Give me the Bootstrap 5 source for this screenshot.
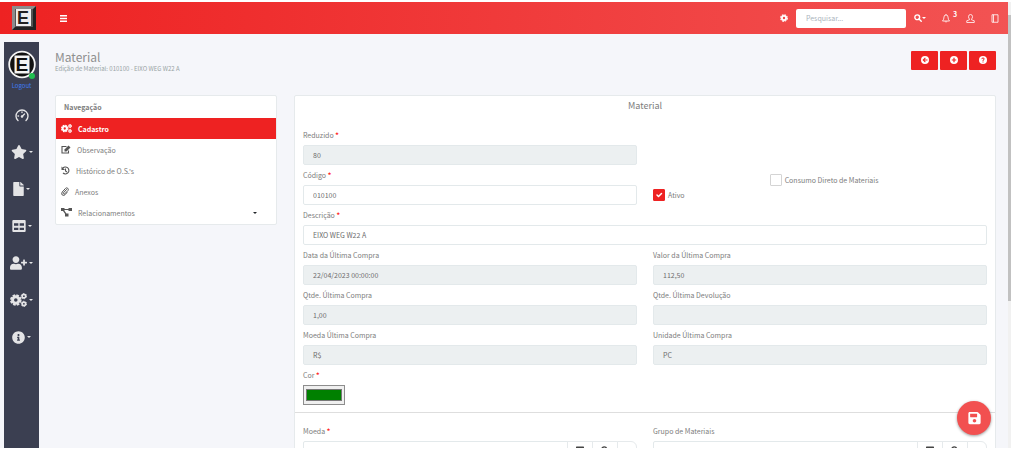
<!DOCTYPE html>
<html lang="pt-BR">
<head>
<meta charset="utf-8">
<meta name="viewport" content="width=device-width, initial-scale=1">
<title>Material</title>
<link rel="stylesheet" href="https://cdn.jsdelivr.net/npm/bootstrap@5.3.0/dist/css/bootstrap.min.css">
<style>
  :root { --brand: #ee2222; --text: #7c7c7c; --line: #e6eaec; }
  body { font-family: "Noto Sans CJK SC", "Noto Sans", sans-serif; font-size: 7px; line-height: 14px; color: var(--text); background: #fff; }
  svg { display: block; fill: currentColor; }
  .shell { padding: 2px 13px 3px 0; }
  .pane { background: #f5f6fa; }
  .scroll-track { width: 3px; background: #f1f1f1; padding-top: 13px; }
  .scroll-thumb { height: 66%; background: #c1c1c1; }
  .topbar { height: 32px; padding: 0 9px 0 12px; color: #fff; background: linear-gradient(90deg, #ee2222, #f25353); }
  .topbar button, .side button { color: inherit; background: none; border: 0; padding: 0; display: flex; align-items: center; }
  .brand-logo { margin-right: 24px; }
  .search { width: 110px; height: 19px; font-size: 7px; padding: 0 10px; border: 0; border-radius: 2px; color: #777; }
  .search::placeholder { color: #aab4bd; }
  .bell-count { font-size: 7px; font-weight: 700; line-height: 8px; top: -4px; left: 11px; }
  .side { width: 35px; margin: 8px 0 0 4px; background: #3b3f51; color: #e4e4e6; padding-top: 8px; }
  .side a { color: #3f7bf0; text-decoration: none; line-height: 14px; font-size: 6px; }
  .side-menu { gap: 17px; padding-top: 12px; }
  .side-menu button { height: 20px; gap: 2px; }
  .caret { width: 0; border: 2px solid transparent; border-top-color: currentColor; border-bottom: 0; }
  .online { width: 6px; height: 6px; background: #20c050; right: 1px; bottom: 0; }
  .content { padding: 15px 12px 0 16px; }
  .page-title { font-size: 12px; line-height: 16px; margin: 0; font-weight: 400; color: #8f8f8f; }
  .page-sub { font-size: 6px; line-height: 8px; color: #98a3a4; }
  .tools { gap: 2px; padding-top: 2px; }
  .tool { width: 27px; height: 19px; padding: 0 0 2px; border-radius: 1px; background: var(--brand); color: #fff; display: flex; align-items: center; justify-content: center; }
  .tool:hover { background: #d11; color: #fff; }
  .page-head { height: 46px; }
  .columns { gap: 17px; }
  .box { background: #fff; border: 1px solid var(--line); border-radius: 2px; }
  .nav-box { flex: 0 0 222px; }
  .nav-box h2 { font-size: 7px; font-weight: 700; line-height: 22px; margin: 0; padding-left: 8px; }
  .nav-box a { display: flex; align-items: center; height: 21px; padding: 0 19px 0 5px; gap: 6px; color: var(--text); text-decoration: none; }
  .nav-box a:last-child { margin-bottom: 1px; }
  .nav-box a svg { color: #555; }
  .nav-box a.active { background: var(--brand); color: #fff; font-weight: 700; }
  .nav-box a.active svg { color: #fff; }
  .form-box h2 { font-size: 9px; font-weight: 400; line-height: 20px; margin: 0 0 12px; text-align: center; }
  .form-box .row { --bs-gutter-x: 16px; margin-bottom: 3px; }
  .form-box .section { padding: 0 8px; }
  .field { display: block; line-height: 14px; margin-bottom: 3px; }
  .req { color: #f22; font-weight: 700; }
  .form-box .form-control { height: 20px; min-height: 20px; padding: 0 9px; font-size: 7px; line-height: 14px; color: #6c6c6c; border-color: #e3e9eb; border-radius: 2px; }
  .form-box .form-control:read-only { background: #ecf0f1; }
  .form-box .form-check-input { width: 12px; height: 12px; margin: 0 3px 0 0; float: none; flex: none; border: 1px solid #d4d4d4; border-radius: 1px; }
  .form-box .form-check-input:checked { background-color: var(--brand); border-color: var(--brand); }
  .check-high { padding-top: 5px; }
  .check-low { padding-top: 20px; }
  .swatch { display: block; width: 42px; height: 20px; padding: 1px 0; border: 1px solid #8d8d8d; background: #efefef; border-radius: 0; }
  .swatch::-webkit-color-swatch { border: 1px solid #777; }
  .swatch::-webkit-color-swatch-wrapper { padding: 2px; }
  .divider { border-top: 1px solid #dedede; margin-top: 7px; padding-top: 11px !important; }
  .picker .btn { width: 26px; height: 20px; padding: 4px 0 0; border: 1px solid var(--line); color: #444; background: #fff; display: flex; justify-content: center; }
  .picker .btn:last-child { width: 20px; }
  .fab { width: 34px; height: 34px; right: 17px; bottom: 13px; background: #f25050; color: #fff; box-shadow: 0 1px 3px #0006; display: flex; align-items: center; justify-content: center; border: 0; padding: 0; }
</style>
</head>
<body>
<svg class="d-none" xmlns="http://www.w3.org/2000/svg">
  <symbol id="cog" viewBox="0 0 16 16"><circle cx="8" cy="8" r="4.200" fill="none" stroke="currentColor" stroke-width="3.600"/><circle cx="8" cy="8" r="6.600" fill="none" stroke="currentColor" stroke-width="2.400" stroke-dasharray="3.400 1.784"/></symbol>
  <symbol id="cogs" viewBox="0 0 22 18"><g fill="none" stroke="currentColor"><circle cx="7.500" cy="9" r="4.200" stroke-width="3.800"/><circle cx="7.500" cy="9" r="6.400" stroke-width="2.200" stroke-dasharray="3.400 1.627"/><circle cx="18" cy="4" r="2.300" stroke-width="2.200"/><circle cx="18" cy="4" r="3.400" stroke-width="1.200" stroke-dasharray="1.780 1.780"/><circle cx="18" cy="14" r="2.300" stroke-width="2.200"/><circle cx="18" cy="14" r="3.400" stroke-width="1.200" stroke-dasharray="1.780 1.780"/></g></symbol>
  <symbol id="mag" viewBox="0 0 16 16"><g fill="none" stroke="currentColor" stroke-width="2.800"><circle cx="6.500" cy="6.500" r="4.800"/><path d="M10 10l4.500 4.500" stroke-linecap="round"/></g></symbol>
  <symbol id="grid" viewBox="0 0 20 18"><path fill-rule="evenodd" d="M1.500 0h17Q20 0 20 1.500v15q0 1.500-1.500 1.500h-17Q0 18 0 16.500v-15Q0 0 1.500 0zM2.500 5v3.500H9V5zM11 5v3.500h6.500V5zM2.500 11.500V15H9v-3.500zM11 11.500V15h6.500v-3.500z"/></symbol>
</svg>

<div class="shell vh-100 d-flex overflow-hidden">
  <div class="pane position-relative flex-grow-1 d-flex flex-column overflow-hidden">
    <header class="topbar d-flex align-items-center flex-shrink-0">
      <svg class="brand-logo" width="24" height="24" viewBox="0 0 24 24" role="img" aria-label="Logo"><path fill="#8c8c8c" d="M0 0h24v24H0z"/><path fill="#222" d="M24 0v24H0l4-4h16V4z"/><path fill="#555" d="M3 3h18v18H3z"/><path fill="#eee" d="M4 3h15v17H4z"/><text x="5" y="18" font-family="Liberation Sans" font-weight="700" font-size="18" fill="#222">E</text></svg>
      <button type="button" aria-label="Menu"><svg width="7" height="7" viewBox="0 0 7 7"><path d="M0 0h7v1.500H0zM0 2.700h7v1.500H0zM0 5.400h7v1.500H0z"/></svg></button>
      <button type="button" class="ms-auto" aria-label="Configurações"><svg width="8" height="8"><use href="#cog"/></svg></button>
      <input class="search form-control flex-grow-0 ms-2" type="search" placeholder="Pesquisar..." aria-label="Pesquisar">
      <button type="button" class="ms-2" aria-label="Buscar"><svg width="8" height="8"><use href="#mag"/></svg><span class="caret"></span></button>
      <button type="button" class="position-relative ms-3" aria-label="Notificações"><svg width="8" height="9" viewBox="0 0 16 18" fill="none" stroke="currentColor" stroke-width="1.600"><path fill="none" d="M1 14q3-3 3-8 0-4 4-4t4 4q0 5 3 8zM6 14.500Q8 18.500 10 14.500M8 0v2"/></svg><span class="bell-count position-absolute">3</span></button>
      <button type="button" class="ms-3" aria-label="Usuário"><svg width="9" height="9" viewBox="0 0 18 18" stroke="currentColor" stroke-width="1.600"><path fill="none" d="M9 1q4 0 4 4.500 0 3-2 4.500v1.500l5.500 2V17h-15v-3.500l5.500-2V10Q5 8.500 5 5.500 5 1 9 1z"/></svg></button>
      <button type="button" class="ms-3" aria-label="Painel"><svg width="8" height="9" viewBox="0 0 16 18" stroke="currentColor" stroke-width="1.600"><path fill="none" d="M2 1.500h12v15H2zM5 1.500v15"/></svg></button>
    </header>

    <div class="d-flex flex-grow-1 overflow-hidden">
      <aside class="side d-flex flex-column align-items-center flex-shrink-0">
        <div class="position-relative">
          <svg width="28" height="29" viewBox="0 0 28 28" role="img" aria-label="Usuário"><circle cx="14" cy="14" r="12.800" fill="#111" stroke="#f4f4f4" stroke-width="1.800"/><path fill="#f4f4f4" d="M6.500 5h15v18h-15z"/><text x="7.500" y="20.500" font-family="Liberation Sans" font-weight="700" font-size="19" fill="#111">E</text></svg>
          <span class="online rounded-circle position-absolute"></span>
        </div>
        <a href="#">Logout</a>
        <nav class="side-menu d-flex flex-column align-items-center">
          <button type="button" aria-label="Painel"><svg width="14" height="13" viewBox="0 0 28 26"><path fill="none" stroke="currentColor" stroke-width="2.800" stroke-linecap="round" d="M6 23A12 12 0 1 1 22 23M14 15l5-5M6 14h1M14 6v1"/><circle cx="14" cy="15" r="2.500"/></svg></button>
          <button type="button" aria-label="Favoritos"><svg width="16" height="14" viewBox="0 0 576 512"><path d="M259.300 17.800L194 150.200 47.900 171.500c-26.200 3.800-36.700 36.100-17.700 54.600l105.700 103-25 145.500c-4.500 26.300 23.200 46 46.400 33.700L288 439.600l130.700 68.700c23.200 12.200 50.900-7.400 46.400-33.700l-25-145.500 105.700-103c19-18.500 8.500-50.800-17.700-54.600L382 150.200 316.700 17.800c-11.700-23.600-45.600-23.900-57.400 0z"/></svg><span class="caret"></span></button>
          <button type="button" aria-label="Documentos"><svg width="11" height="14" viewBox="0 0 384 512"><path d="M224 136V0H24C10.700 0 0 10.700 0 24v464c0 13.300 10.700 24 24 24h336c13.300 0 24-10.700 24-24V160H248c-13.200 0-24-10.800-24-24zm160-14.100v6.100H256V0h6.100c6.400 0 12.500 2.500 17 7l97.900 98c4.500 4.500 7 10.600 7 16.900z"/></svg><span class="caret"></span></button>
          <button type="button" aria-label="Tabelas"><svg width="14" height="12"><use href="#grid"/></svg><span class="caret"></span></button>
          <button type="button" aria-label="Usuários"><svg width="17" height="14" viewBox="0 0 640 512"><path d="M624 208h-64v-64c0-8.800-7.200-16-16-16h-32c-8.800 0-16 7.200-16 16v64h-64c-8.800 0-16 7.200-16 16v32c0 8.800 7.200 16 16 16h64v64c0 8.800 7.200 16 16 16h32c8.800 0 16-7.200 16-16v-64h64c8.800 0 16-7.200 16-16v-32c0-8.800-7.200-16-16-16zm-400 48c70.700 0 128-57.300 128-128S294.700 0 224 0 96 57.300 96 128s57.300 128 128 128zm89.600 32h-16.700c-22.200 10.200-46.900 16-72.900 16s-50.600-5.800-72.900-16h-16.700C60.200 288 0 348.200 0 422.400V464c0 26.500 21.500 48 48 48h352c26.500 0 48-21.500 48-48v-41.600c0-74.200-60.200-134.400-134.400-134.400z"/></svg><span class="caret"></span></button>
          <button type="button" aria-label="Configurações"><svg width="17" height="14"><use href="#cogs"/></svg><span class="caret"></span></button>
          <button type="button" aria-label="Informações"><svg width="13" height="13" viewBox="0 0 512 512"><path d="M256 8C119 8 8 119 8 256s111 248 248 248 248-111 248-248S393 8 256 8zm0 110c23.200 0 42 18.800 42 42s-18.800 42-42 42-42-18.800-42-42 18.800-42 42-42zm56 254c0 6.600-5.400 12-12 12h-88c-6.600 0-12-5.400-12-12v-24c0-6.600 5.400-12 12-12h12v-64h-12c-6.600 0-12-5.400-12-12v-24c0-6.600 5.400-12 12-12h64c6.600 0 12 5.400 12 12v100h12c6.600 0 12 5.400 12 12v24z"/></svg><span class="caret"></span></button>
        </nav>
      </aside>

      <main class="content flex-grow-1 overflow-hidden">
        <div class="page-head d-flex justify-content-between align-items-start">
          <div>
            <h1 class="page-title">Material</h1>
            <div class="page-sub">Edição de Material: 010100 - EIXO WEG W22 A</div>
          </div>
          <div class="tools d-flex">
            <button type="button" class="tool btn" aria-label="Voltar"><svg width="8" height="8" viewBox="0 0 16 16"><path fill-rule="evenodd" d="M8 0a8 8 0 1 1 0 16A8 8 0 0 1 8 0zM8 3L3 8l5 5 1.500-1.500L7 9h6V7H7l2.500-2.500z"/></svg></button>
            <button type="button" class="tool btn" aria-label="Adicionar"><svg width="8" height="8" viewBox="0 0 16 16"><path fill-rule="evenodd" d="M8 0a8 8 0 1 1 0 16A8 8 0 0 1 8 0zM6.800 3.500v3.300H3.500v2.400h3.300v3.300h2.400V9.200h3.300V6.800H9.200V3.500z"/></svg></button>
            <button type="button" class="tool btn" aria-label="Ajuda"><svg width="8" height="8" viewBox="0 0 16 16"><circle cx="8" cy="8" r="8"/><path fill="none" stroke="#ee2222" stroke-width="2" d="M5.500 6.200Q5.700 4 8 4t2.500 2Q10.500 7.200 8 8.500V10M8 11v2"/></svg></button>
          </div>
        </div>

        <div class="columns d-flex align-items-start">
          <nav class="nav-box box" aria-label="Navegação">
            <h2>Navegação</h2>
            <a href="#" class="active"><svg width="11" height="9"><use href="#cogs"/></svg>Cadastro</a>
            <a href="#"><svg width="10" height="9" viewBox="0 0 20 18"><path fill="none" stroke="currentColor" stroke-width="2.200" d="M11 3H2v13h13v-5"/><path d="M7 9l8-8 4 4-8 8H7z"/></svg>Observação</a>
            <a href="#"><svg width="9" height="9" viewBox="0 0 18 18"><path fill="none" stroke="currentColor" stroke-width="2.200" d="M3 5a7 7 0 1 1 1 9M9 5v5l3 2"/><path d="M1 1v7h7z"/></svg>Histórico de O.S.'s</a>
            <a href="#"><svg width="8" height="9" viewBox="0 0 16 18"><path fill="none" stroke="currentColor" stroke-width="2" stroke-linecap="round" d="M11 5l-6 6.500q-1 1.500.3 2.500 1.200.6 2.200-.5L14 7q1.500-2.500-.5-4.500-2.500-1.800-4.500.3L2.500 10Q0 13.500 2.500 16q3 2 5.500-.5l4-4.500"/></svg>Anexos</a>
            <a href="#"><svg width="11" height="9" viewBox="0 0 22 18"><path d="M0 0h7v6H0zM15 0h7v6h-7zM8 11h7v6H8zM6 2h10v2H6zM4 6l2.500-1 5 7-2.500 1z"/></svg>Relacionamentos<span class="caret ms-auto text-dark"></span></a>
          </nav>

          <form class="form-box box flex-grow-1">
            <h2>Material</h2>
            <div class="section">
              <div class="row"><div class="col-6"><label class="field" for="reduzido">Reduzido <span class="req">*</span></label><input id="reduzido" class="form-control" value="80" readonly></div></div>
              <div class="row">
                <div class="col-6"><label class="field" for="codigo">Código <span class="req">*</span></label><input id="codigo" class="form-control" value="010100"></div>
                <div class="col-6"><div class="row mb-0">
                  <div class="col-4 check-low d-flex align-items-center"><input id="ativo" class="form-check-input" type="checkbox" checked><label for="ativo">Ativo</label></div>
                  <div class="col-8 check-high d-flex align-items-center align-self-start"><input id="consumo" class="form-check-input" type="checkbox"><label for="consumo">Consumo Direto de Materiais</label></div>
                </div></div>
              </div>
              <div class="row"><div class="col-12"><label class="field" for="descricao">Descrição <span class="req">*</span></label><input id="descricao" class="form-control" value="EIXO WEG W22 A"></div></div>
              <div class="row">
                <div class="col-6"><label class="field" for="data">Data da Última Compra</label><input id="data" class="form-control" value="22/04/2023 00:00:00" readonly></div>
                <div class="col-6"><label class="field" for="valor">Valor da Última Compra</label><input id="valor" class="form-control" value="112,50" readonly></div>
              </div>
              <div class="row">
                <div class="col-6"><label class="field" for="qtde">Qtde. Última Compra</label><input id="qtde" class="form-control" value="1,00" readonly></div>
                <div class="col-6"><label class="field" for="devolucao">Qtde. Última Devolução</label><input id="devolucao" class="form-control" readonly></div>
              </div>
              <div class="row">
                <div class="col-6"><label class="field" for="moedault">Moeda Última Compra</label><input id="moedault" class="form-control" value="R$" readonly></div>
                <div class="col-6"><label class="field" for="unidade">Unidade Última Compra</label><input id="unidade" class="form-control" value="PC" readonly></div>
              </div>
              <label class="field" for="cor">Cor <span class="req">*</span></label>
              <input id="cor" class="swatch" type="color" value="#008000">
            </div>
            <div class="section divider">
              <div class="row">
                <div class="col-6"><label class="field" for="moeda">Moeda <span class="req">*</span></label>
                  <div class="picker input-group flex-nowrap"><input id="moeda" class="form-control"><button type="button" class="btn" aria-label="Listar"><svg width="8" height="8"><use href="#grid"/></svg></button><button type="button" class="btn" aria-label="Pesquisar moeda"><svg width="8" height="8"><use href="#mag"/></svg></button><button type="button" class="btn" aria-label="Mais"></button></div></div>
                <div class="col-6"><label class="field" for="grupo">Grupo de Materiais</label>
                  <div class="picker input-group flex-nowrap"><input id="grupo" class="form-control"><button type="button" class="btn" aria-label="Listar"><svg width="8" height="8"><use href="#grid"/></svg></button><button type="button" class="btn" aria-label="Pesquisar grupo"><svg width="8" height="8"><use href="#mag"/></svg></button><button type="button" class="btn" aria-label="Mais"></button></div></div>
              </div>
            </div>
          </form>
        </div>
      </main>
    </div>
    <button type="button" class="fab rounded-circle position-absolute" aria-label="Salvar"><svg width="13" height="14" viewBox="0 0 448 512"><path fill-rule="evenodd" d="M434 130l-84-84a48 48 0 0 0-34-14H48C21.500 32 0 53.500 0 80v352c0 26.500 21.500 48 48 48h352c26.500 0 48-21.500 48-48V164a48 48 0 0 0-14-34zM224 416c-35.300 0-64-28.700-64-64s28.700-64 64-64 64 28.700 64 64-28.700 64-64 64zm96-304.500V212c0 6.600-5.400 12-12 12H76c-6.600 0-12-5.400-12-12V108c0-6.600 5.400-12 12-12h228.500c3.200 0 6.200 1.300 8.500 3.500l3.500 3.500a12 12 0 0 1 3.500 8.500z"/></svg></button>
  </div>
  <div class="scroll-track flex-shrink-0"><div class="scroll-thumb"></div></div>
</div>
<script src="https://cdn.jsdelivr.net/npm/bootstrap@5.3.0/dist/js/bootstrap.bundle.min.js"></script>
</body>
</html>
